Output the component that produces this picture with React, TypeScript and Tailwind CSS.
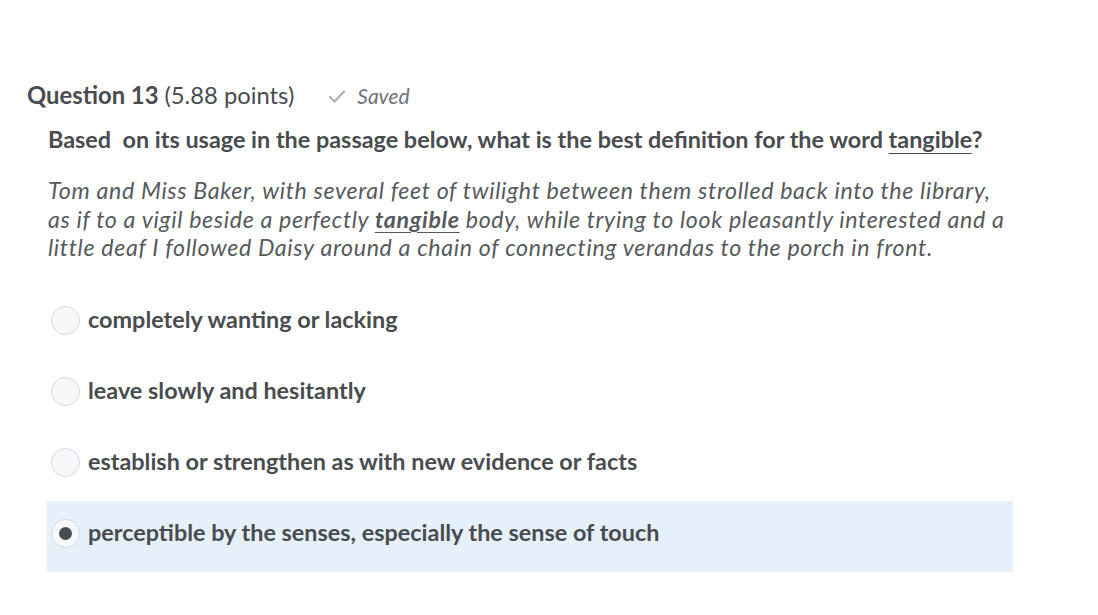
import React from "react";

const options = [
  "completely wanting or lacking",
  "leave slowly and hesitantly",
  "establish or strengthen as with new evidence or facts",
  "perceptible by the senses, especially the sense of touch",
];

export default function App() {
  const selected = 3;
  return (
    <div className="w-[1098px] h-[615px] bg-white text-[#494c4e]" style={{ fontFamily: "Lato, 'Noto Sans', sans-serif" }}>
      <div className="pt-[79px] pl-[27px]">
        <div className="flex items-center h-[34px]">
          <span className="text-[23.8px] font-bold">Question 13</span>
          <span className="text-[23.8px] ml-[6px]">(5.88 points)</span>
          <span className="ml-[34px] flex items-center text-[#6e7376] italic text-[21px]">
            <svg width="18" height="15" viewBox="0 0 18 15" className="mr-[11px]">
              <path d="M2 8 L6.5 12.5 L16 2.5" fill="none" stroke="#a9b0b6" strokeWidth="2.2" strokeLinecap="round" strokeLinejoin="round" />
            </svg>
            Saved
          </span>
        </div>
        <div className="pl-[21px]">
          <p className="mt-[11px] text-[23.4px] font-bold leading-[30px]">
            Based&nbsp; on its usage in the passage below, what is the best definition for the word <span className="underline underline-offset-[5px] decoration-1">tangible</span>?
          </p>
          <p className="mt-[22px] w-[968px] text-[23.2px] italic leading-[28.5px] tracking-[0.65px] text-[#565a5c]">
            Tom and Miss Baker, with several feet of twilight between them strolled back into the library, as if to a vigil beside a perfectly <span className="font-bold underline underline-offset-[4px] decoration-1">tangible</span> body, while trying to look pleasantly interested and a little deaf I followed Daisy around a chain of connecting verandas to the porch in front.
          </p>
          <div className="mt-[26px] w-[966px] -ml-[1px]">
            {options.map((o, i) => (
              <div key={i} className={`flex items-center h-[71px] pb-[6px] pl-[4px] ${i === selected ? "bg-[#e6f0fa]" : ""}`}>
                <div className="w-[29px] h-[29px] rounded-full border border-[#d3d9e3] bg-[#f6f7f8] flex items-center justify-center">
                  {i === selected && <div className="w-[13px] h-[13px] rounded-full bg-[#494c4e]" />}
                </div>
                <span className="ml-[8px] text-[23.4px] font-bold">{o}</span>
              </div>
            ))}
          </div>
        </div>
      </div>
    </div>
  );
}
